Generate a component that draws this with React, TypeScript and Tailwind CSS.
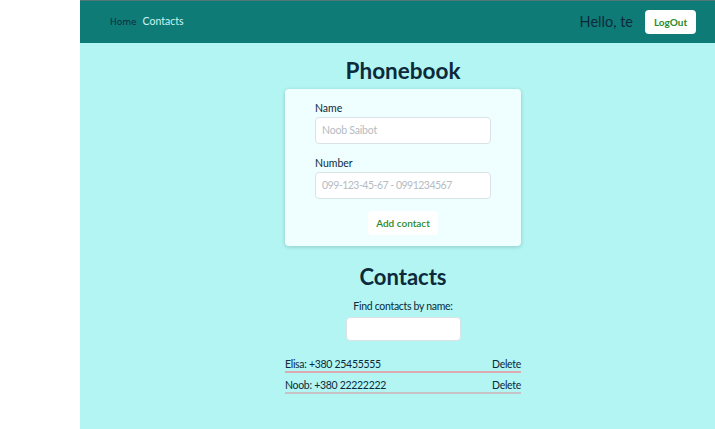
export default function App() {
  const font = { fontFamily: "Lato, 'Open Sans', sans-serif" };
  return (
    <div className="flex min-h-[429px] w-full bg-white" style={font}>
      <div className="w-[80px] shrink-0" />
      <div className="flex flex-1 flex-col bg-[#b2f5f3]">
        <header className="flex h-[43px] items-center justify-between border-t border-[#4f7876] bg-[#0f7b77] pl-[30px] pr-[19px]">
          <nav className="flex items-baseline gap-[6px] text-[10.5px]">
            <span className="text-[#0c2a3a] font-['DejaVu_Sans'] text-[9px]">Home</span>
            <span className="text-[#c9f5f3]">Contacts</span>
          </nav>
          <div className="flex items-center gap-[12px]">
            <span className="text-[14.5px] text-[#0c2a3a]">Hello, te</span>
            <button className="h-[24px] w-[51px] rounded-[4px] bg-white text-[10px] font-bold text-[#2a8a2a]">LogOut</button>
          </div>
        </header>
        <main className="flex flex-col items-center pl-[11px]">
          <h1 className="mt-[14px] text-[22.5px] font-bold leading-[28px] text-[#0c2a3a]">Phonebook</h1>
          <form className="mt-[4px] flex w-[236px] flex-col rounded-[4px] bg-[#effefe] px-[30px] pb-[11px] pt-[12px] shadow-[0_1px_4px_rgba(0,0,0,0.18)]">
            <label className="text-[10.5px] leading-[14px] text-[#0c2a3a]">Name</label>
            <div className="mt-[2px] flex h-[27px] items-center rounded-[4px] border border-[#d9e3e6] bg-white px-[6px] text-[10.5px] tracking-[-0.2px] text-[#b3bcc3]">Noob Saibot</div>
            <label className="mt-[12px] text-[10.5px] leading-[14px] text-[#0c2a3a]">Number</label>
            <div className="mt-[2px] flex h-[27px] items-center rounded-[4px] border border-[#d9e3e6] bg-white px-[6px] text-[10.5px] tracking-[-0.5px] text-[#b3bcc3]">099-123-45-67 - 0991234567</div>
            <button type="button" className="mx-auto mt-[12px] h-[24px] w-[70px] rounded-[4px] bg-white text-[10px] font-semibold text-[#2a8a2a]">Add contact</button>
          </form>
          <h2 className="mt-[17px] text-[22px] font-bold leading-[28px] text-[#0c2a3a]">Contacts</h2>
          <p className="mt-[8px] text-[10.5px] leading-[14px] tracking-[-0.3px] text-[#0c2a3a]">Find contacts by name:</p>
          <div className="mt-[4px] h-[24px] w-[115px] rounded-[4px] border border-[#d9e3e6] bg-white" />
          <ul className="mt-[17px] flex w-[236px] flex-col gap-[6px] text-[10.5px] tracking-[-0.3px] text-[#0c2a3a]">
            <li className="flex items-end justify-between border-b-2 border-[#dcaab0] leading-[13px]">
              <span>Elisa: +380 25455555</span>
              <span>Delete</span>
            </li>
            <li className="flex items-end justify-between border-b-2 border-[#c7c2c6] leading-[13px]">
              <span>Noob: +380 22222222</span>
              <span>Delete</span>
            </li>
          </ul>
        </main>
      </div>
    </div>
  );
}
